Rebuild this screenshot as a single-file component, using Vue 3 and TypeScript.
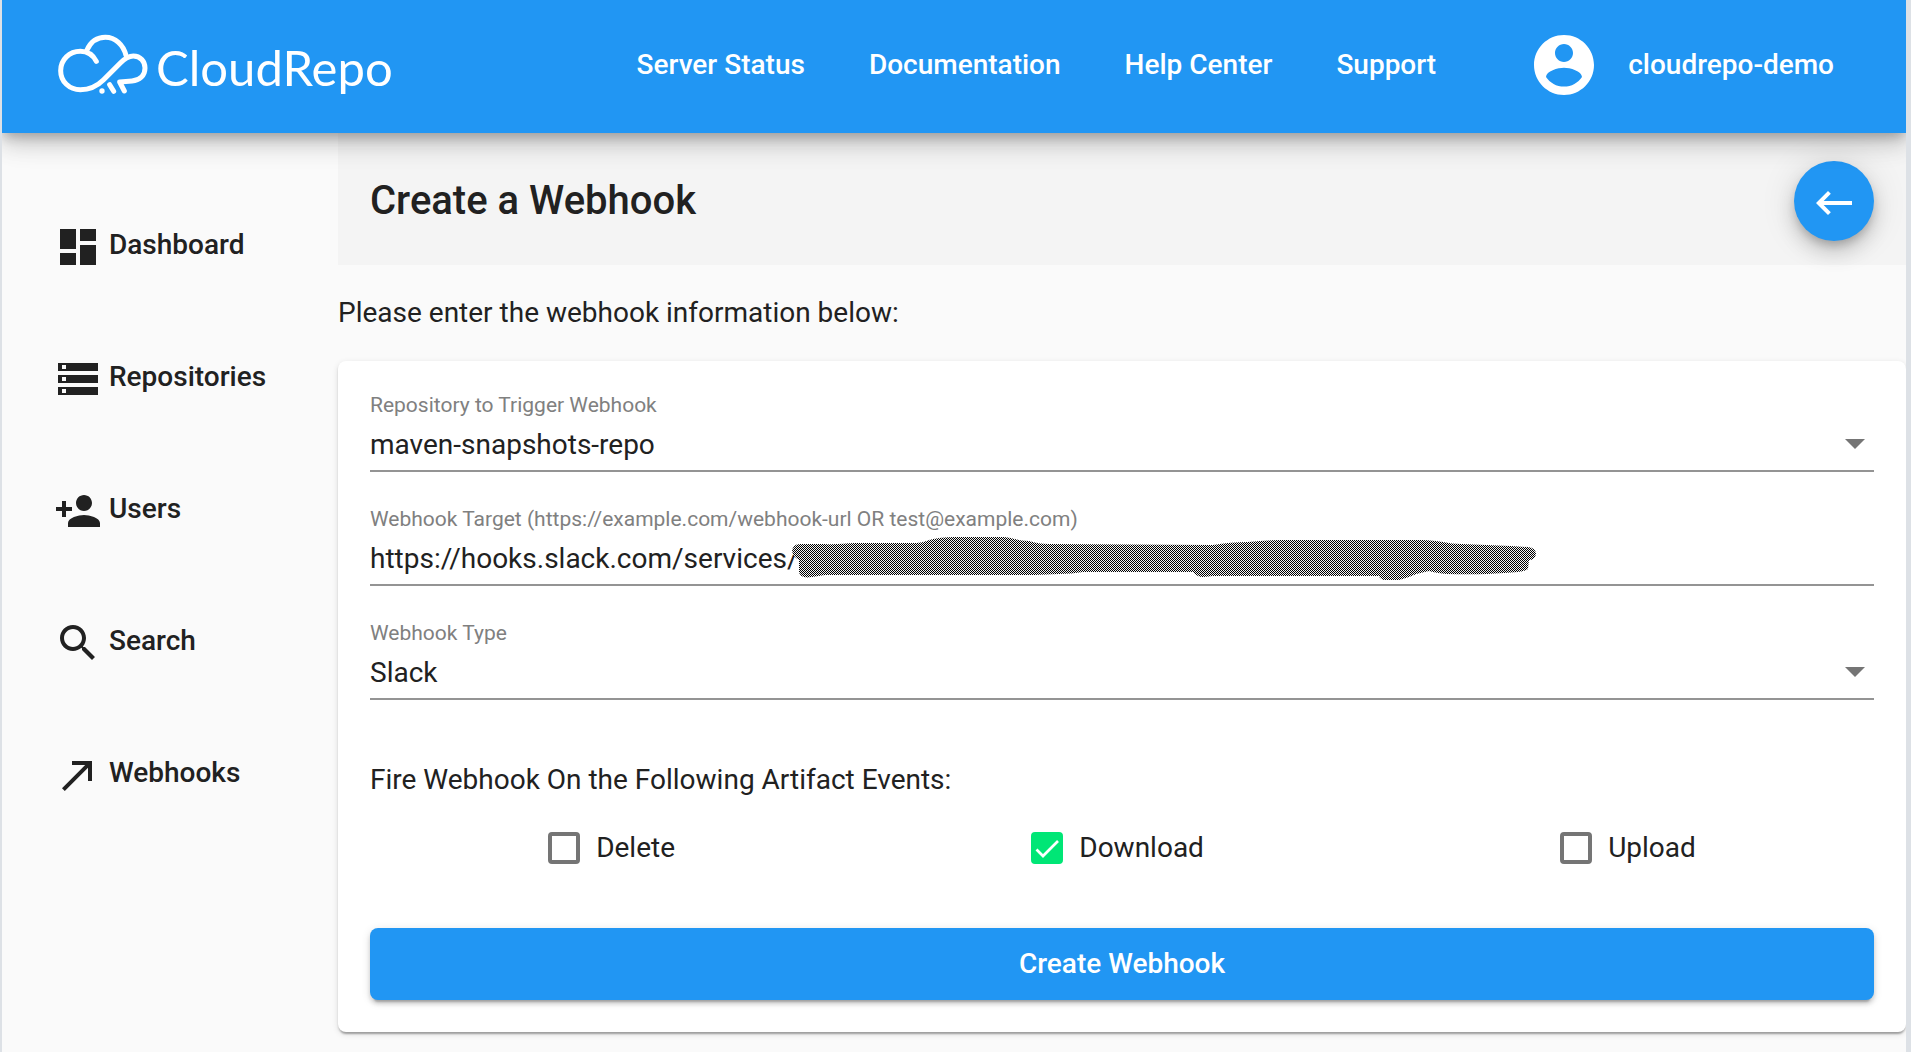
<script setup lang="ts">
import { ref } from 'vue'

interface MenuItem {
  label: string
  path: string
}

interface ArtifactEvent {
  id: string
  label: string
  enabled: boolean
}

const links: string[] = ['Server Status', 'Documentation', 'Help Center', 'Support']

const menu: MenuItem[] = [
  { label: 'Dashboard', path: 'M3 13h8V3H3v10zm0 8h8v-6H3v6zm10 0h8V11h-8v10zm0-18v6h8V3h-8z' },
  {
    label: 'Repositories',
    path: 'M2 20h20v-4H2v4zm2-3h2v2H4v-2zM2 4v4h20V4H2zm4 3H4V5h2v2zm-4 7h20v-4H2v4zm2-3h2v2H4v-2z',
  },
  {
    label: 'Users',
    path: 'M15 12c2.21 0 4-1.79 4-4s-1.79-4-4-4-4 1.790-4 4 1.790 4 4 4zm-9-2V7H4v3H1v2h3v3h2v-3h3v-2H6zm9 4c-2.670 0-8 1.340-8 4v2h16v-2c0-2.660-5.330-4-8-4z',
  },
  {
    label: 'Search',
    path: 'M15.500 14h-.790l-.280-.270C15.410 12.590 16 11.110 16 9.500 16 5.910 13.090 3 9.500 3S3 5.910 3 9.500 5.910 16 9.500 16c1.610 0 3.090-.590 4.230-1.570l.270.280v.790l5 4.990L20.490 19l-4.990-5zm-6 0C7.010 14 5 11.990 5 9.500S7.010 5 9.500 5 14 7.010 14 9.500 11.990 14 9.500 14z',
  },
  { label: 'Webhooks', path: 'M9 5v2h6.590L4 18.590 5.410 20 17 8.410V15h2V5z' },
]

const repository = ref('maven-snapshots-repo')
const target = ref('https://hooks.slack.com/services/')
const hookType = ref('Slack')

const events = ref<ArtifactEvent[]>([
  { id: 'event-delete', label: 'Delete', enabled: false },
  { id: 'event-download', label: 'Download', enabled: true },
  { id: 'event-upload', label: 'Upload', enabled: false },
])
</script>

<template>
  <div class="app">
    <header class="topbar">
      <a class="brand" href="#">
        <svg class="brand-mark" viewBox="170 100 276 189" aria-hidden="true">
          <g fill="none" stroke="#fff" stroke-width="15" stroke-linecap="round" stroke-linejoin="round">
            <path d="M288 185C278 166 261 155 240 155C207 155 181 180 181 213C181 246 207 270 240 270C268 270 291 259 309 241L360 190C373 177 384 169 399 169C420 169 434 185 434 205C434 229 417 242 395 244L358 247L372 274" />
            <path d="M260 151C271 127 291 113 315 113C345 113 369 135 377 167" />
            <path d="M328 255L340 275" />
          </g>
          <circle cx="305" cy="274" r="8" fill="#fff" />
        </svg>
        <span class="brand-name">CloudRepo</span>
      </a>
      <nav class="links">
        <a v-for="link in links" :key="link" href="#">{{ link }}</a>
      </nav>
      <a class="account" href="#">
        <svg class="avatar" viewBox="0 0 24 24" fill="currentColor" aria-hidden="true">
          <path d="M12 2C6.480 2 2 6.480 2 12s4.480 10 10 10 10-4.480 10-10S17.520 2 12 2zm0 3c1.660 0 3 1.340 3 3s-1.340 3-3 3-3-1.340-3-3 1.340-3 3-3zm0 14.200c-2.500 0-4.710-1.280-6-3.220.030-1.990 4-3.080 6-3.080 1.990 0 5.970 1.090 6 3.080-1.290 1.940-3.500 3.220-6 3.220z" />
        </svg>
        <span>cloudrepo-demo</span>
      </a>
    </header>

    <div class="body">
      <nav class="sidebar">
        <a v-for="item in menu" :key="item.label" class="menu-item" href="#">
          <svg class="icon" viewBox="0 0 24 24" fill="currentColor" aria-hidden="true">
            <path :d="item.path" />
          </svg>
          <span class="menu-label">{{ item.label }}</span>
        </a>
      </nav>

      <main class="content">
        <div class="title-bar">
          <h1>Create a Webhook</h1>
          <button class="fab" type="button" aria-label="Back">
            <svg class="icon" viewBox="0 0 24 24" fill="currentColor" aria-hidden="true">
              <path d="M21 11H6.830l3.580-3.590L9 6l-6 6 6 6 1.410-1.410L6.830 13H21z" />
            </svg>
          </button>
        </div>

        <p class="intro">Please enter the webhook information below:</p>

        <form class="card" @submit.prevent>
          <div class="field">
            <label for="repository">Repository to Trigger Webhook</label>
            <div class="control">
              <select id="repository" v-model="repository">
                <option>maven-snapshots-repo</option>
              </select>
              <svg class="caret" viewBox="0 0 20 10" aria-hidden="true"><path d="M0 0h20L10 10z" /></svg>
            </div>
          </div>

          <div class="field">
            <label for="target">Webhook Target (https://example.com/webhook-url OR test@example.com)</label>
            <div class="control">
              <input id="target" v-model="target" type="text" />
              <svg class="redaction" viewBox="792 536 745 45" aria-hidden="true">
                <defs>
                  <pattern id="dither" width="2" height="2" patternUnits="userSpaceOnUse" x="792" y="536">
                    <rect width="2" height="2" fill="#f4f4f4" />
                    <rect width="1" height="1" fill="#000" />
                    <rect x="1" y="1" width="1" height="1" fill="#000" />
                  </pattern>
                </defs>
                <path
                  fill="url(#dither)"
                  d="M800 544H825C835 545 845 543 855 543H914C921 543 924 542 929 540Q940 537 954 537H1004C1014 538 1018 541 1029 541Q1038 544 1049 544L1213 545C1225 543 1236 542 1248 542Q1265 540 1282 540H1422C1438 540 1448 544 1462 544L1511 546L1528 547Q1536 548 1536 554Q1535 560 1529 560L1528 569Q1525 572 1504 573Q1480 575 1447 574Q1436 573 1429 571Q1418 573 1409 577L1399 580H1384Q1380 579 1379 576H1213L1203 577Q1197 577 1193 572H1083Q1072 574 1059 574L1034 575H825L812 577Q800 579 799 572V560Q793 557 792 551Q793 544 800 544Z"
                />
              </svg>
            </div>
          </div>

          <div class="field">
            <label for="hook-type">Webhook Type</label>
            <div class="control">
              <select id="hook-type" v-model="hookType">
                <option>Slack</option>
              </select>
              <svg class="caret" viewBox="0 0 20 10" aria-hidden="true"><path d="M0 0h20L10 10z" /></svg>
            </div>
          </div>

          <fieldset class="events">
            <legend>Fire Webhook On the Following Artifact Events:</legend>
            <div class="event-row">
              <label v-for="event in events" :key="event.id" class="event" :for="event.id">
                <span class="box">
                  <input :id="event.id" v-model="event.enabled" type="checkbox" />
                  <svg v-if="event.enabled" class="tick" viewBox="0 0 32 32" aria-hidden="true">
                    <path d="M5.500 17.500L12 24L27 9" fill="none" stroke="#fff" stroke-width="2.700" />
                  </svg>
                </span>
                <span>{{ event.label }}</span>
              </label>
            </div>
          </fieldset>

          <button class="submit" type="submit">Create Webhook</button>
        </form>
      </main>
    </div>
  </div>
</template>

<style>
body {
  background: #dde1e6;
}
</style>

<style scoped>
.app {
  box-sizing: border-box;
  min-height: 100vh;
  margin: 0 5px 0 2px;
  overflow: hidden;
  background: #fafafa;
  color: #212121;
  font-family: Roboto, "Liberation Sans", sans-serif;
  font-size: 28px;
  line-height: 32px;
}

.app *,
.app *::before {
  box-sizing: border-box;
}

a {
  color: inherit;
  text-decoration: none;
}

button,
input,
select {
  margin: 0;
  font: inherit;
  color: inherit;
}

.topbar {
  position: relative;
  z-index: 1;
  display: flex;
  align-items: center;
  height: 133px;
  padding: 0 72px 4px 55px;
  background: #2196f3;
  color: #fff;
  font-weight: 500;
  box-shadow: 0 6px 10px -2px rgba(0, 0, 0, 0.2), 0 12px 20px rgba(0, 0, 0, 0.14),
    0 2px 36px rgba(0, 0, 0, 0.12);
}

.brand {
  display: flex;
  align-items: center;
  gap: 7px;
}

.brand-mark {
  width: 92px;
  height: 63px;
}

.brand-name {
  padding-top: 4px;
  font-family: Lato, "Open Sans", sans-serif;
  font-size: 49px;
  font-weight: 400;
  line-height: 60px;
}

.links {
  display: flex;
  gap: 64px;
  margin-left: auto;
}

.account {
  display: flex;
  align-items: center;
  gap: 28px;
  margin-left: 92px;
}

.avatar {
  width: 72px;
  height: 72px;
}

.body {
  display: flex;
}

.sidebar {
  display: flex;
  flex: none;
  flex-direction: column;
  gap: 84px;
  width: 336px;
  padding: 90px 0 0 52px;
  font-weight: 500;
}

.menu-item {
  display: flex;
  align-items: center;
  gap: 7px;
}

.menu-label {
  padding-bottom: 4px;
}

.icon {
  display: block;
  flex: none;
  width: 48px;
  height: 48px;
}

.content {
  flex: 1;
  min-width: 0;
}

.title-bar {
  display: flex;
  align-items: center;
  justify-content: space-between;
  height: 132px;
  padding: 4px 32px 0;
  background: #f4f4f4;
}

h1 {
  margin: 0;
  font-size: 40px;
  font-weight: 500;
  line-height: 48px;
}

.fab {
  display: grid;
  place-items: center;
  width: 80px;
  height: 80px;
  padding: 4px 0 0;
  border: 0;
  border-radius: 50%;
  background: #2196f3;
  color: #fff;
  box-shadow: 0 6px 10px -2px rgba(0, 0, 0, 0.2), 0 12px 20px rgba(0, 0, 0, 0.14),
    0 2px 36px rgba(0, 0, 0, 0.12);
}

.intro {
  margin: 32px 0;
}

.card {
  padding: 32px;
  border-radius: 8px;
  background: #fff;
  box-shadow: 0 4px 2px -2px rgba(0, 0, 0, 0.2), 0 2px 2px rgba(0, 0, 0, 0.14),
    0 2px 6px rgba(0, 0, 0, 0.12);
}

.field {
  margin-bottom: 35px;
}

.field label {
  display: block;
  color: #808080;
  font-size: 21px;
  line-height: 24px;
}

.control {
  position: relative;
}

.control input,
.control select {
  display: block;
  width: 100%;
  height: 55px;
  padding: 2px 0 0;
  border: 0;
  border-bottom: 2px solid #949494;
  border-radius: 0;
  outline: 0;
  background: transparent;
  appearance: none;
}

.caret {
  position: absolute;
  top: 22px;
  right: 9px;
  width: 20px;
  height: 10px;
  fill: #757575;
  pointer-events: none;
}

.redaction {
  position: absolute;
  top: 5px;
  left: 422px;
  width: 745px;
  height: 45px;
}

.events {
  margin: 64px 0;
  padding: 0;
  border: 0;
}

.events legend {
  padding: 0;
}

.event-row {
  display: flex;
  justify-content: space-around;
  margin-top: 36px;
}

.event {
  display: flex;
  align-items: center;
  gap: 16px;
}

.box {
  display: grid;
  width: 32px;
  height: 32px;
}

.box input,
.tick {
  grid-area: 1 / 1;
  width: 32px;
  height: 32px;
}

.box input {
  border: 4px solid #757575;
  border-radius: 4px;
  appearance: none;
}

.box input:checked {
  border-color: #00e676;
  background: #00e676;
}

.tick {
  z-index: 1;
  pointer-events: none;
}

.submit {
  display: block;
  width: 100%;
  height: 72px;
  padding: 0;
  border: 0;
  border-radius: 8px;
  background: #2196f3;
  color: #fff;
  font-weight: 500;
  box-shadow: 0 6px 2px -4px rgba(0, 0, 0, 0.2), 0 4px 4px rgba(0, 0, 0, 0.14),
    0 2px 10px rgba(0, 0, 0, 0.12);
}
</style>
